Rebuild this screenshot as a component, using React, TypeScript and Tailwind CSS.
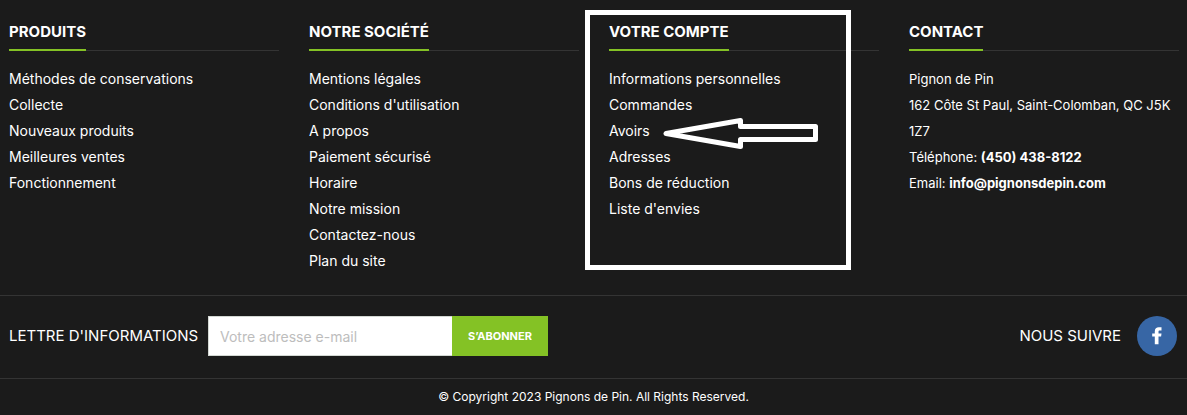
import type { ReactNode } from 'react';

interface LinkColumn {
  title: string;
  links: string[];
  highlighted?: boolean;
}

const columns: LinkColumn[] = [
  {
    title: 'PRODUITS',
    links: [
      'Méthodes de conservations',
      'Collecte',
      'Nouveaux produits',
      'Meilleures ventes',
      'Fonctionnement',
    ],
  },
  {
    title: 'NOTRE SOCIÉTÉ',
    links: [
      'Mentions légales',
      "Conditions d'utilisation",
      'A propos',
      'Paiement sécurisé',
      'Horaire',
      'Notre mission',
      'Contactez-nous',
      'Plan du site',
    ],
  },
  {
    title: 'VOTRE COMPTE',
    links: [
      'Informations personnelles',
      'Commandes',
      'Avoirs',
      'Adresses',
      'Bons de réduction',
      "Liste d'envies",
    ],
    highlighted: true,
  },
];

function ColumnTitle({ children }: { children: ReactNode }) {
  return (
    <h2 className="mb-[15px] flex border-b border-[#343434] text-[15px] leading-6 font-bold">
      <span className="-mb-px border-b-2 border-[#84c225] pb-[5px]">{children}</span>
    </h2>
  );
}

// White frame and arrow drawn over the account column
function Highlight() {
  return (
    <div className="pointer-events-none absolute -top-[10px] right-7 bottom-1 -left-6 border-5 border-white">
      <svg
        className="absolute top-[102px] left-[72px]"
        width="158"
        height="34"
        viewBox="0 0 158 34"
        fill="none"
        stroke="white"
        strokeWidth="5"
        strokeLinejoin="round"
        aria-hidden="true"
      >
        <path d="M4 16.5 L78.500 3.500 V9.500 H153.500 V22.500 H78.500 V29.500 Z" />
      </svg>
    </div>
  );
}

export default function App() {
  return (
    <footer className="min-h-screen bg-[#1b1b1b] font-['Inter','Liberation_Sans',sans-serif] text-[14px] leading-[26px] text-white">
      <div className="grid grid-cols-4 gap-[30px] pt-5 pr-2 pb-[21px] pl-[9px]">
        {columns.map((column) => (
          <section key={column.title} className="relative">
            <ColumnTitle>{column.title}</ColumnTitle>
            <ul>
              {column.links.map((link) => (
                <li key={link}>
                  <a href="#" className="hover:text-[#84c225]">
                    {link}
                  </a>
                </li>
              ))}
            </ul>
            {column.highlighted && <Highlight />}
          </section>
        ))}

        <section>
          <ColumnTitle>CONTACT</ColumnTitle>
          <address className="text-[13px] leading-[26px] not-italic">
            <p>Pignon de Pin</p>
            <p>162 Côte St Paul, Saint-Colomban, QC J5K 1Z7</p>
            <p>
              Téléphone:{' '}
              <a href="tel:4504388122" className="font-bold">
                (450) 438-8122
              </a>
            </p>
            <p>
              Email:{' '}
              <a href="mailto:info@pignonsdepin.com" className="font-bold">
                info@pignonsdepin.com
              </a>
            </p>
          </address>
        </section>
      </div>

      <div className="flex items-center justify-between border-y border-[#343434] pt-5 pr-[10px] pb-[22px] pl-[9px]">
        <form className="flex items-center" onSubmit={(e) => e.preventDefault()}>
          <label htmlFor="newsletter-email" className="w-[199px] text-[15px] leading-6 whitespace-nowrap">
            LETTRE D'INFORMATIONS
          </label>
          <input
            id="newsletter-email"
            type="email"
            placeholder="Votre adresse e-mail"
            className="h-10 w-[244px] border border-r-0 border-[#d3d8d3] bg-white px-[11px] text-[14px] text-gray-800 outline-none placeholder:text-[#bdbdbd]"
          />
          <button type="submit" className="h-10 w-24 bg-[#84c225] text-[11px] font-bold text-white">
            S’ABONNER
          </button>
        </form>

        <div className="flex items-center gap-4">
          <span className="text-[15px] leading-6">NOUS SUIVRE</span>
          <a
            href="#"
            aria-label="Facebook"
            className="flex size-10 items-center justify-center rounded-full bg-[#3766a5]"
          >
            <svg width="10" height="18" viewBox="0 0 10 18" fill="white" aria-hidden="true">
              <path d="M9.500 .3v3.200H7.700C6.800 3.500 6.500 4 6.500 4.700v1.800h3L9.100 9.600H6.500v7.700H2.800V9.600H.2V6.500h2.600V4.200C2.800 1.600 4.400 .2 6.800 .2c1.200 0 2.200 0 2.700.1z" />
            </svg>
          </a>
        </div>
      </div>

      <p className="py-[5px] text-center text-xs leading-[26px]">
        © Copyright 2023 Pignons de Pin. All Rights Reserved.
      </p>
    </footer>
  );
}
